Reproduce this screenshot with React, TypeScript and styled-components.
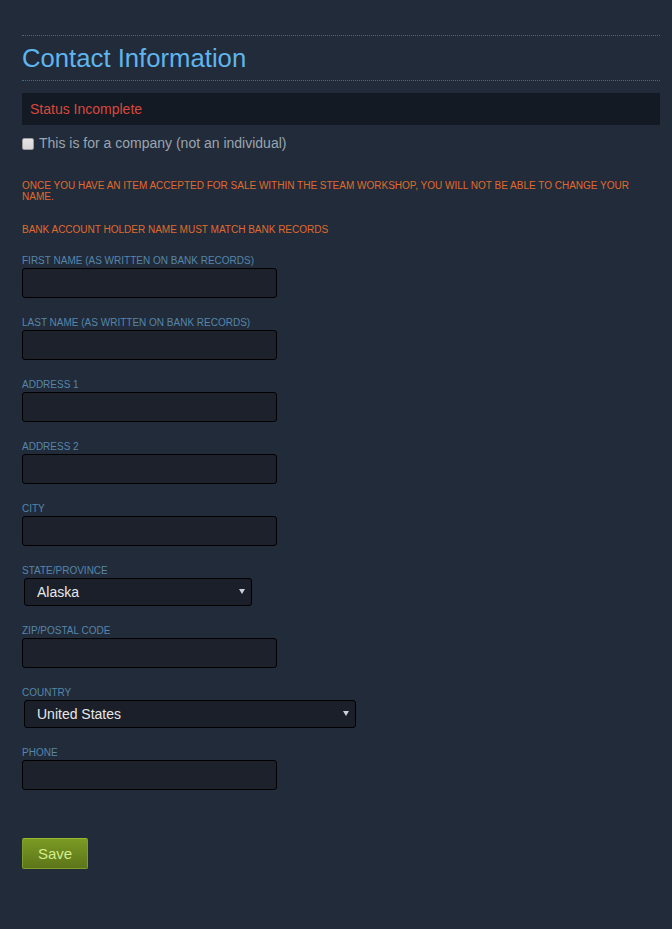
import React from "react";
import styled, { createGlobalStyle } from "styled-components";

const Global = createGlobalStyle`
  html, body { margin: 0; padding: 0; background: #212b3a; }
  body { font-family: "Liberation Sans", Arial, sans-serif; min-height: 929px; }
  * { box-sizing: border-box; }
`;

const Page = styled.div`
  padding: 35px 12px 60px 22px;
  background: #212b3a;
  min-height: 929px;
`;

const Heading = styled.h2`
  margin: 0;
  padding: 6px 0;
  border-top: 1px dotted #3d6c92;
  border-bottom: 1px dotted #3d6c92;
  font-family: "Liberation Sans", Arial, sans-serif;
  font-weight: normal;
  font-size: 25.7px;
  line-height: 32px;
  color: #5fb5ee;
`;

const StatusBar = styled.div`
  margin-top: 12px;
  height: 32px;
  padding: 0 8px;
  background: #131a23;
  color: #d8483c;
  font-size: 14px;
  line-height: 32px;
`;

const CheckRow = styled.label`
  margin-top: 10px;
  display: flex;
  align-items: center;
  font-size: 14px;
  line-height: 17px;
  color: #9aa5b0;
`;

const Check = styled.input`
  appearance: none;
  -webkit-appearance: none;
  width: 12px;
  height: 12px;
  margin: 0 5px 0 0;
  flex: none;
  background: linear-gradient(to bottom, #e4e4e4, #d6d6d6);
  border: 1px solid #9c9c9c;
  border-radius: 2px;
`;

const Notice = styled.p<{ $top: number }>`
  margin: ${(p) => p.$top}px 0 0;
  font-size: 10px;
  line-height: 11px;
  color: #e06a2c;
`;

const Fields = styled.div`
  margin-top: 20px;
  display: flex;
  flex-direction: column;
  gap: 19px;
`;

const Field = styled.div`
  display: flex;
  flex-direction: column;
  align-items: flex-start;
  gap: 1px;
`;

const Label = styled.label`
  font-size: 10px;
  line-height: 12px;
  color: #5686a9;
`;

const TextInput = styled.input`
  width: 255px;
  height: 30px;
  background: #1c212b;
  border: 1px solid #000;
  border-radius: 3px;
  color: #e0e0e0;
  font-family: "Liberation Sans", Arial, sans-serif;
  font-size: 14px;
  padding: 0 8px;
  outline: none;
`;

const SelectWrap = styled.div<{ $w: number }>`
  position: relative;
  margin-left: 2px;
  width: ${(p) => p.$w}px;
  height: 28px;
`;

const Select = styled.select`
  appearance: none;
  -webkit-appearance: none;
  width: 100%;
  height: 100%;
  background: #1a1f29;
  border: 1px solid #000;
  border-radius: 3px;
  color: #e8e8e8;
  font-family: "Liberation Sans", Arial, sans-serif;
  font-size: 14px;
  padding: 0 0 0 12px;
  outline: none;
`;

const Arrow = styled.span`
  position: absolute;
  right: 7px;
  top: 11px;
  width: 0;
  height: 0;
  border-left: 3px solid transparent;
  border-right: 3px solid transparent;
  border-top: 5px solid #c9d2da;
  pointer-events: none;
`;

const SaveButton = styled.button`
  margin-top: 48px;
  width: 66px;
  height: 31px;
  border: 1px solid #7e9f27;
  border-top-color: #97b930;
  border-radius: 2px;
  background: linear-gradient(to bottom, #7a9a24 0%, #5d7519 100%);
  color: #d3ec8c;
  font-family: "Liberation Sans", Arial, sans-serif;
  font-size: 15px;
  padding: 0;
  cursor: pointer;
`;

const textFields = [
  "FIRST NAME (AS WRITTEN ON BANK RECORDS)",
  "LAST NAME (AS WRITTEN ON BANK RECORDS)",
  "ADDRESS 1",
  "ADDRESS 2",
  "CITY",
];

export default function App() {
  return (
    <>
      <Global />
      <Page>
        <Heading>Contact Information</Heading>
        <StatusBar>Status Incomplete</StatusBar>
        <CheckRow>
          <Check type="checkbox" />
          This is for a company (not an individual)
        </CheckRow>
        <Notice $top={28}>
          ONCE YOU HAVE AN ITEM ACCEPTED FOR SALE WITHIN THE STEAM WORKSHOP, YOU WILL NOT BE ABLE TO CHANGE YOUR NAME.
        </Notice>
        <Notice $top={22}>BANK ACCOUNT HOLDER NAME MUST MATCH BANK RECORDS</Notice>
        <Fields>
          {textFields.map((f) => (
            <Field key={f}>
              <Label>{f}</Label>
              <TextInput type="text" />
            </Field>
          ))}
          <Field>
            <Label>STATE/PROVINCE</Label>
            <SelectWrap $w={228}>
              <Select defaultValue="Alaska">
                <option>Alabama</option>
                <option>Alaska</option>
                <option>Arizona</option>
              </Select>
              <Arrow />
            </SelectWrap>
          </Field>
          <Field>
            <Label>ZIP/POSTAL CODE</Label>
            <TextInput type="text" />
          </Field>
          <Field>
            <Label>COUNTRY</Label>
            <SelectWrap $w={332}>
              <Select defaultValue="United States">
                <option>United States</option>
                <option>Canada</option>
              </Select>
              <Arrow />
            </SelectWrap>
          </Field>
          <Field>
            <Label>PHONE</Label>
            <TextInput type="text" />
          </Field>
        </Fields>
        <SaveButton>Save</SaveButton>
      </Page>
    </>
  );
}
